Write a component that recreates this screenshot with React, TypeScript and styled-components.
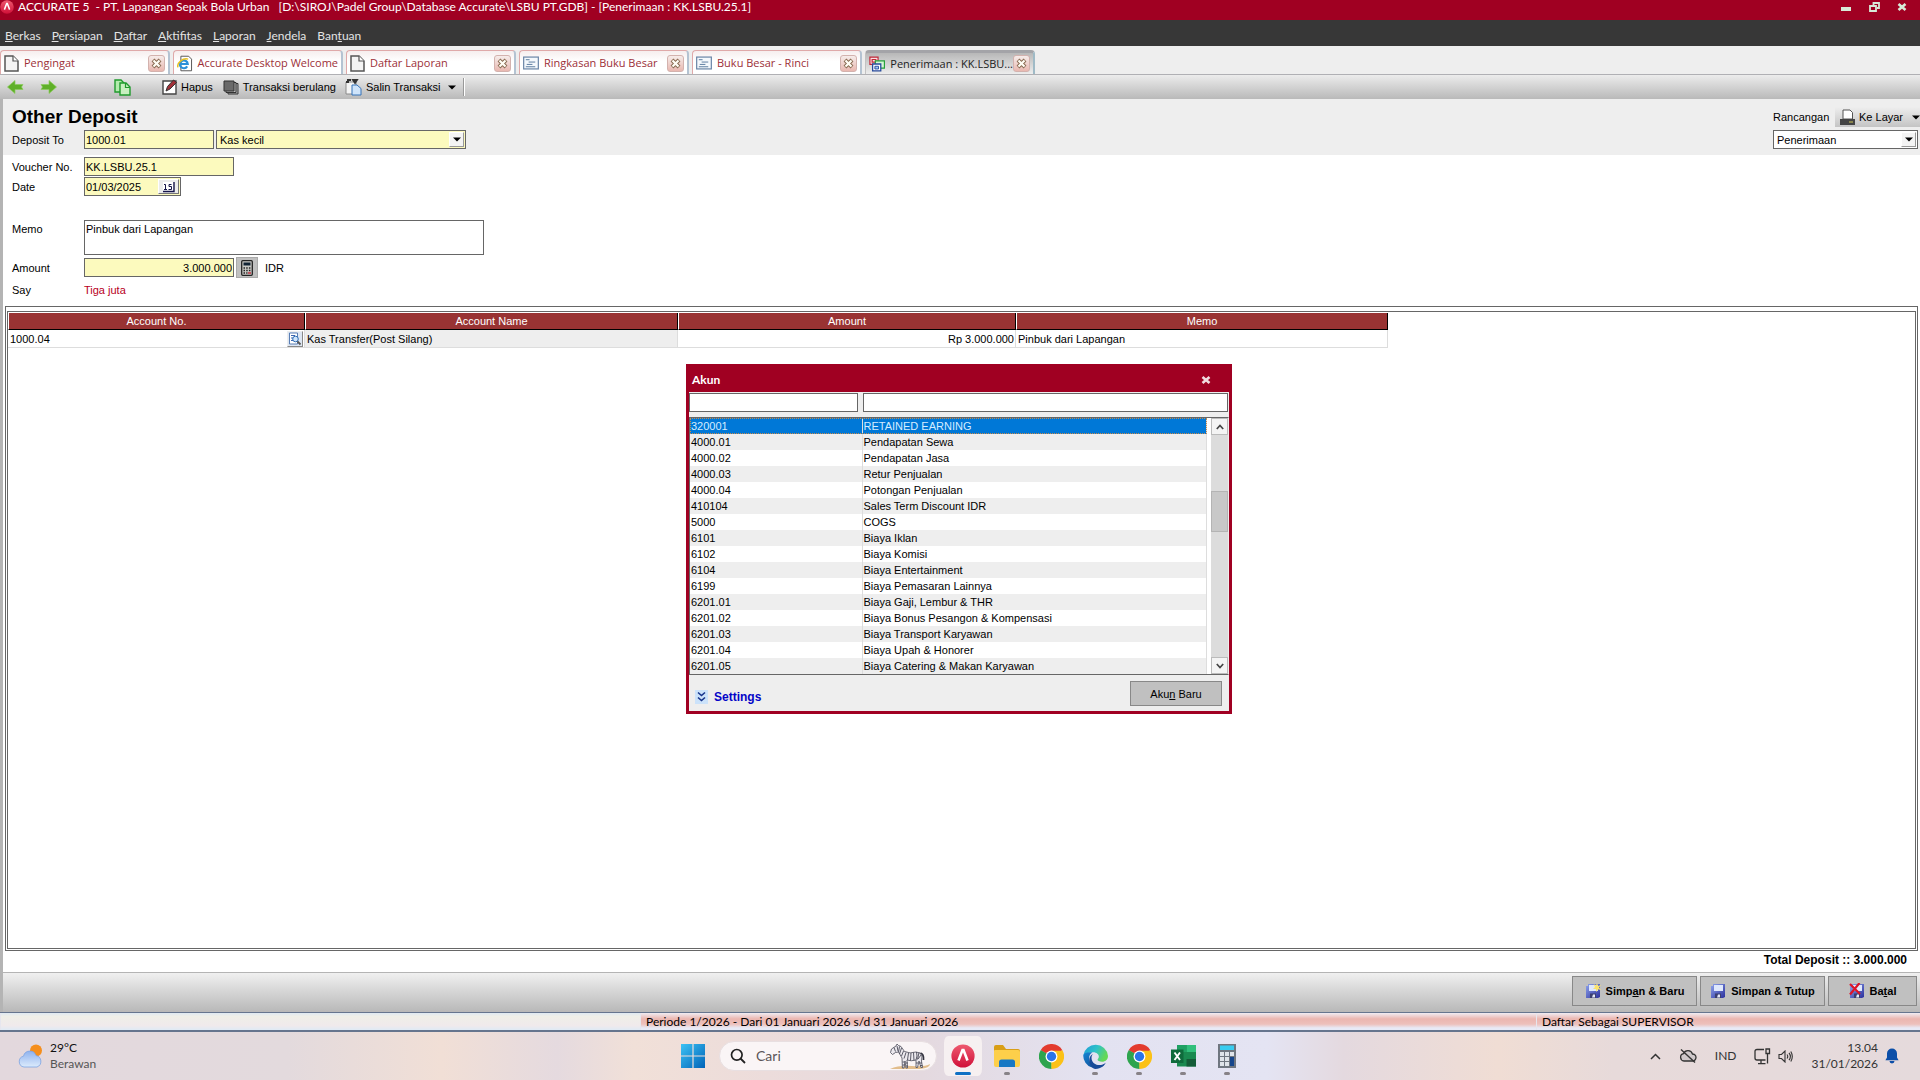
import React from "react";
import styled, { createGlobalStyle, css } from "styled-components";

const SANS = `"Liberation Sans", Arial, sans-serif`;
const UI = `Lato, "Open Sans", sans-serif`;
const TAB_FONT = `"Open Sans", "Noto Sans", sans-serif`;
const RED = "#a00022";
const YELLOW = "#fcfabe";

const GlobalStyle = createGlobalStyle`
  *, *::before, *::after { box-sizing: border-box; }
  body { margin: 0; background: #fff; color: #000; font: 11px/16px ${SANS}; }
  button, input, select, textarea { font: inherit; color: inherit; margin: 0; }
  h1, h2 { margin: 0; }
`;

const Screen = styled.div`
  min-height: 100vh;
  display: flex;
  flex-direction: column;
`;

/* ---------- window chrome ---------- */
const TitleBar = styled.header`
  height: 20px;
  padding: 0 9px 0 0;
  display: flex;
  align-items: flex-start;
  background: ${RED};
  color: #fff;
  font: 12px/14px ${UI};
  white-space: pre;
`;
const AppTitle = styled.span`
  flex: 1;
  padding-left: 4px;
`;
const WindowButtons = styled.div`
  display: flex;
  gap: 10px;
`;
const ChromeButton = styled.button`
  width: 18px;
  height: 14px;
  padding: 0;
  border: 0;
  background: none;
  display: grid;
  place-items: center;
`;
const MenuBar = styled.nav`
  height: 26px;
  padding: 5px 5px 0;
  display: flex;
  align-items: center;
  gap: 11px;
  background: #373737;
`;
const MenuLink = styled.a`
  color: #e4e4e4;
  text-decoration: none;
  font: 12px/20px ${UI};
`;

/* ---------- tabs ---------- */
const TabStrip = styled.div`
  height: 29px;
  padding-top: 4px;
  display: flex;
  align-items: stretch;
  gap: 3px;
  background: #eee;
  border-bottom: 1px solid #b0b0b4;
`;
const Tab = styled.div<{ $active?: boolean }>`
  width: 170px;
  padding: 1px 3px 0;
  display: flex;
  align-items: center;
  border: 1px solid #dfa9a9;
  border-right: 2px solid #b4c3d2;
  border-bottom: 0;
  border-radius: 4px 4px 0 0;
  background: linear-gradient(#f6eeee, #fff 45%);
  color: #9c3038;
  ${(p) =>
    p.$active &&
    css`
      padding-top: 0;
      color: #222;
      border-color: #a4a4a8 #9fbac6 #eee #c2c2c2;
      border-top-width: 3px;
      background: linear-gradient(#b8b8b8, #ededed);
    `}
`;
const TabButton = styled.button`
  flex: 1;
  min-width: 0;
  padding: 0;
  border: 0;
  background: none;
  display: flex;
  align-items: center;
  gap: 5px;
  font: 11px/16px ${TAB_FONT};
  white-space: nowrap;
  text-align: left;
`;
const TabClose = styled.button`
  width: 17px;
  height: 17px;
  padding: 0;
  display: grid;
  place-items: center;
  border: 1px solid #d3b2ae;
  border-radius: 3px;
  background: linear-gradient(#f6ecea, #e9b8b0);
`;

/* ---------- toolbar ---------- */
const ToolBar = styled.div`
  height: 24px;
  padding-left: 7px;
  display: flex;
  align-items: center;
  background: linear-gradient(#ececec, #b9b9b9);
`;
const ToolGroup = styled.div<{ $before?: number; $gap?: number }>`
  display: flex;
  align-items: center;
  gap: ${(p) => p.$gap ?? 10}px;
  margin-left: ${(p) => p.$before ?? 0}px;
`;
const ToolButton = styled.button`
  height: 20px;
  padding: 0;
  border: 0;
  background: none;
  display: flex;
  align-items: center;
  gap: 4px;
  white-space: nowrap;
`;
const ToolDivider = styled.span`
  width: 2px;
  height: 18px;
  border-left: 1px solid #999;
  border-right: 1px solid #fff;
`;

/* ---------- document ---------- */
const Workspace = styled.main`
  flex: 1;
  display: flex;
  flex-direction: column;
  border-left: 3px solid #b4b4b4;
`;
const DocHead = styled.section`
  height: 56px;
  padding: 7px 0 6px 9px;
  display: flex;
  justify-content: space-between;
  align-items: flex-end;
  background: #eee;
`;
const DocTitle = styled.h1`
  font: bold 19px/22px ${SANS};
`;
const Row = styled.div<{ $top?: number; $align?: string }>`
  display: flex;
  align-items: ${(p) => p.$align ?? "center"};
  gap: 2px;
  margin-top: ${(p) => p.$top ?? 0}px;
`;
const Label = styled.label`
  width: 70px;
  line-height: 18px;
`;
const fieldBase = css`
  border: 1px solid #666;
  border-radius: 0;
  padding: 0 1px;
  outline: 0;
`;
const Field = styled.input<{ $w: number; $end?: boolean; $white?: boolean }>`
  ${fieldBase}
  width: ${(p) => p.$w}px;
  height: 19px;
  background: ${(p) => (p.$white ? "#fff" : YELLOW)};
  text-align: ${(p) => (p.$end ? "right" : "left")};
`;
const MemoField = styled.textarea`
  ${fieldBase}
  width: 400px;
  height: 35px;
  resize: none;
  line-height: 16px;
`;
const SelectBox = styled.div<{ $w: number }>`
  position: relative;
  width: ${(p) => p.$w}px;
  height: 19px;
`;
const Select = styled.select<{ $white?: boolean }>`
  ${fieldBase}
  padding-left: 3px;
  appearance: none;
  width: 100%;
  height: 100%;
  background: ${(p) => (p.$white ? "#fff" : YELLOW)};
`;
const SelectArrow = styled.span`
  position: absolute;
  top: 2px;
  right: 2px;
  bottom: 2px;
  width: 15px;
  display: grid;
  place-items: center;
  background: #f4f4f4;
  border: 1px solid;
  border-color: #fff #999 #999 #fff;
  pointer-events: none;
`;
const DateBox = styled.div`
  width: 97px;
  height: 19px;
  padding: 1px;
  display: flex;
  align-items: stretch;
  border: 1px solid #666;
  background: ${YELLOW};
`;
const DateInput = styled.input`
  flex: 1;
  min-width: 0;
  padding: 0;
  border: 0;
  outline: 0;
  background: none;
`;
const DateButton = styled.button`
  width: 21px;
  padding: 0;
  display: grid;
  place-items: center;
  border: 1px solid;
  border-color: #fff #777 #777 #fff;
  background: #ececec;
`;
const CalcButton = styled.button`
  width: 22px;
  height: 21px;
  padding: 0;
  display: grid;
  place-items: center;
  border: 1px solid #aaa;
  background: #c0c0c0;
`;
const Currency = styled.span`
  padding-left: 5px;
`;
const Say = styled.output`
  color: #b8001c;
  line-height: 18px;
`;
const Form = styled.section`
  padding: 2px 9px 7px;
`;
const Design = styled.div`
  width: 147px;
`;
const DesignTop = styled.div`
  display: flex;
  align-items: center;
  justify-content: space-between;
  margin-bottom: 3px;
`;
const PrintButton = styled.button`
  width: 85px;
  height: 20px;
  padding: 0 0 0 4px;
  border: 0;
  display: flex;
  align-items: center;
  gap: 3px;
  background: linear-gradient(#eee, #c4c4c4);
  white-space: nowrap;
  svg:last-child { margin-left: auto; }
`;

/* ---------- journal grid ---------- */
const GridFrame = styled.section`
  flex: 1;
  margin: 0 2px 0 2px;
  padding: 4px 1px 1px;
  display: flex;
  border: 1px solid #666;
`;
const GridInner = styled.div`
  flex: 1;
  padding: 1px 0 0;
  border: 1px solid #666;
`;
const Grid = styled.table`
  width: 1380px;
  border-collapse: separate;
  border-spacing: 0;
  table-layout: fixed;
`;
const HeadCell = styled.th<{ $w: number }>`
  width: ${(p) => p.$w}px;
  height: 17px;
  padding: 0;
  background: #993333;
  color: #fff;
  font-weight: normal;
  line-height: 15px;
  border-right: 1px solid #000;
  border-bottom: 1px solid #000;
  border-left: 1px solid #fff;
`;
const Cell = styled.td<{ $shade?: boolean; $end?: boolean }>`
  height: 18px;
  padding: 0 1px 0 2px;
  background: ${(p) => (p.$shade ? "#eee" : "#fff")};
  text-align: ${(p) => (p.$end ? "right" : "left")};
  border-right: 1px solid #ddd;
  border-bottom: 1px solid #ddd;
`;
const CellSplit = styled.div`
  display: flex;
  justify-content: space-between;
  align-items: center;
`;
const LookupButton = styled.button`
  width: 16px;
  height: 16px;
  padding: 0;
  display: grid;
  place-items: center;
  border: 1px solid;
  border-color: #eee #888 #888 #eee;
  background: #dde6f2;
`;
const TotalLine = styled.div`
  height: 21px;
  padding: 1px 13px 0 0;
  font: bold 12px/16px ${SANS};
  text-align: right;
`;
const ActionBar = styled.footer`
  height: 40px;
  padding: 3px 3px 0;
  display: flex;
  justify-content: flex-end;
  gap: 3px;
  border-top: 1px solid #b4b4b4;
  background: linear-gradient(#f0f0f0, #b8b8b8);
`;
const ActionButton = styled.button<{ $w: number }>`
  width: ${(p) => p.$w}px;
  height: 30px;
  padding: 0;
  display: flex;
  justify-content: center;
  align-items: center;
  gap: 5px;
  border: 1px solid #888;
  background: #c0c0c0;
  font-weight: bold;
`;

/* ---------- status bar ---------- */
const StatusBar = styled.div`
  height: 20px;
  display: grid;
  grid-template-columns: 5fr 7fr 3fr;
  border: 1px solid #66758e;
  border-width: 1px 0 2px;
  font: 12px/17px ${UI};
`;
const StatusCell = styled.div<{ $tinted?: boolean }>`
  padding-left: 5px;
  border-left: 1px solid #e6e6ee;
  background: ${(p) =>
    p.$tinted
      ? "linear-gradient(#f0ecf2, #ebb6b0 35%, #edc0bb 65%, #e8eaf6 88%)"
      : "linear-gradient(#dfe9f2, #efefe8 20%, #f0eaec 75%, #dfeaf5)"};
`;

/* ---------- account dialog ---------- */
const DialogLayer = styled.div`
  position: fixed;
  inset: 0;
  padding: 0 2px 2px 0;
  display: grid;
  place-items: center;
  pointer-events: none;
`;
const Dialog = styled.section`
  width: 546px;
  border: 3px solid ${RED};
  background: #eee;
  pointer-events: auto;
`;
const DialogBar = styled.div`
  height: 25px;
  padding: 0 14px 0 3px;
  display: flex;
  align-items: center;
  justify-content: space-between;
  background: ${RED};
  color: #fff;
`;
const DialogTitle = styled.h2`
  font: bold 12px/20px ${UI};
`;
const FilterRow = styled.div`
  padding: 1px 1px 5px 0;
  display: flex;
  gap: 5px;
  input:last-child { flex: 1; }
`;
const ListFrame = styled.div`
  display: flex;
  border: 1px solid #666;
  border-right-color: #eee;
  background: #fff;
`;
const List = styled.table`
  width: 517px;
  border-collapse: collapse;
  table-layout: fixed;
`;
const ListRow = styled.tr<{ $selected?: boolean }>`
  height: 16px;
  &:nth-child(even) { background: #eee; }
  ${(p) =>
    p.$selected &&
    css`
      background: #0078d7;
      color: #d4ecff;
      outline: 1px dotted #c98a4a;
      outline-offset: -1px;
    `}
`;
const ListCell = styled.td<{ $w?: number }>`
  ${(p) => p.$w && `width: ${p.$w}px;`}
  padding: 0 2px 0 1px;
  line-height: 16px;
  border-right: 1px solid #ddd;
`;
const Scroll = styled.div`
  width: 17px;
  margin-left: auto;
  display: flex;
  flex-direction: column;
  background: #dcdcdc;
`;
const ScrollButton = styled.button`
  width: 17px;
  height: 17px;
  padding: 0;
  display: grid;
  place-items: center;
  border: 1px solid #bbb;
  background: #f4f4f4;
`;
const ScrollTrack = styled.div`
  flex: 1;
  padding-top: 56px;
`;
const ScrollThumb = styled.div`
  height: 41px;
  border: 1px solid #b4b4b4;
  background: #c8c8c8;
`;
const DialogFoot = styled.div`
  height: 36px;
  padding: 6px 7px 5px 6px;
  display: flex;
  justify-content: space-between;
  align-items: center;
`;
const SettingsLink = styled.a`
  display: flex;
  align-items: center;
  gap: 6px;
  padding-top: 7px;
  color: #0404c8;
  font: bold 12px/16px ${SANS};
  text-decoration: none;
`;
const NewButton = styled.button`
  width: 92px;
  height: 25px;
  border: 1px solid #888;
  background: #c0c0c0;
`;

/* ---------- taskbar ---------- */
const TaskBar = styled.footer`
  height: 48px;
  display: grid;
  grid-template-columns: 1fr auto 1fr;
  align-items: center;
  background: linear-gradient(
    90deg, #e3d8dd, #e3dadd 15%, #f1dfd6 23%, #e5dadf 29%, #f1e0d8 33%, #ecdcdb 40%,
    #e4d9df 48%, #e3e2f1 57%, #e4e4f3 66%, #e4d9df 70%, #f0ddd4 78%, #e7dada 84%, #e5dadc);
`;
const Weather = styled.div`
  padding-left: 18px;
  display: flex;
  align-items: center;
  gap: 7px;
  font: 12px/16px ${UI};
  color: #555;
`;
const Temp = styled.div`
  color: #111;
`;
const TaskItems = styled.div`
  display: flex;
  align-items: center;
`;
const SearchBox = styled.label`
  width: 218px;
  height: 30px;
  margin: 0 4px;
  padding: 0 5px 0 10px;
  display: flex;
  align-items: center;
  gap: 10px;
  border-radius: 15px;
  background: #faf5f6;
  border: 1px solid #e8dfe1;
`;
const SearchInput = styled.input`
  flex: 1;
  min-width: 0;
  padding: 0;
  border: 0;
  outline: 0;
  background: none;
  font: 14px/20px ${UI};
  &::placeholder { color: #5c5658; opacity: 1; }
`;
const TaskButton = styled.button<{ $active?: boolean; $running?: boolean }>`
  position: relative;
  width: 44px;
  height: 40px;
  padding: 0;
  border: 3px solid transparent;
  border-width: 0 3px;
  border-radius: 7px;
  background: ${(p) => (p.$active ? "#f6f0f1" : "none")};
  background-clip: padding-box;
  display: grid;
  place-items: center;
  ${(p) =>
    (p.$active || p.$running) &&
    css`
      &::after {
        content: "";
        position: absolute;
        bottom: 1px;
        left: 50%;
        width: ${p.$active ? 16 : 6}px;
        height: 3px;
        border-radius: 2px;
        transform: translateX(-50%);
        background: ${p.$active ? "#0f70c4" : "#878287"};
      }
    `}
`;
const Tray = styled.div`
  padding-right: 21px;
  display: flex;
  justify-content: flex-end;
  align-items: center;
  gap: 18px;
  font: 12px/16px ${UI};
  color: #333;
`;
const TrayPair = styled.div`
  display: flex;
  align-items: center;
  gap: 7px;
`;
const Clock = styled.div`
  text-align: right;
`;

/* ---------- icons ---------- */
const AccurateLogo = ({ size }: { size: number }) => (
  <svg width={size} height={size} viewBox="0 0 24 24" aria-hidden="true">
    <defs>
      <linearGradient id="acc" x1="0" y1="0" x2="0" y2="1">
        <stop offset="0" stopColor="#ee5a70" />
        <stop offset="1" stopColor="#d01038" />
      </linearGradient>
    </defs>
    <circle cx="12" cy="12" r="11.6" fill="url(#acc)" />
    <path d="M7.500 16.500L11.500 6h1l4 10.500" fill="none" stroke="#fff" strokeWidth="2.600" />
  </svg>
);
const CloseX = ({ c = "#d8ead8" }: { c?: string }) => (
  <svg width="10" height="8" viewBox="0 0 10 8" aria-hidden="true">
    <path d="M1.500 1l7 6M8.500 1l-7 6" stroke={c} strokeWidth="2.600" />
  </svg>
);
const DownTri = () => (
  <svg width="8" height="5" viewBox="0 0 8 5" aria-hidden="true">
    <path d="M0 .5h8L4 4.500z" fill="#000" />
  </svg>
);
const TabX = () => (
  <svg width="11" height="11" viewBox="0 0 11 11" aria-hidden="true">
    <path d="M2 2l7 7M9 2l-7 7" stroke="#86694f" strokeWidth="4" />
    <path d="M2.500 2.500l6 6M8.500 2.500l-6 6" stroke="#fffdf4" strokeWidth="2.200" />
  </svg>
);
const PageIcon = () => (
  <svg width="15" height="17" viewBox="0 0 15 17" aria-hidden="true">
    <path d="M1 1h8l5 5v10H1z" fill="#f4f4f4" stroke="#555" strokeWidth="1.500" />
    <path d="M9 1v5h5" fill="#fff" stroke="#555" strokeWidth="1.200" />
  </svg>
);
const IeIcon = () => (
  <svg width="16" height="17" viewBox="0 0 16 17" aria-hidden="true">
    <path d="M4 1h8l3 3v12H4z" fill="#fff" stroke="#555" />
    <path d="M10.500 11.500a4 4 0 1 1 .6-2.500H3.500" fill="none" stroke="#2b8fd8" strokeWidth="2.200" />
    <path d="M1 12.500C-.5 8 6 2.500 11.500 4" fill="none" stroke="#e8c020" strokeWidth="1.500" />
  </svg>
);
const ReportIcon = () => (
  <svg width="16" height="14" viewBox="0 0 17 14" aria-hidden="true">
    <rect x=".7" y=".7" width="15.600" height="12.600" fill="#f4f8fc" stroke="#6c87a8" strokeWidth="1.300" />
    <path d="M3 3.500h4M6 6h7M4 8.500h6M3 11h10" stroke="#55779c" />
  </svg>
);
const FormsIcon = () => (
  <svg width="18" height="18" viewBox="0 0 18 17" aria-hidden="true">
    <path d="M1 1h9v8H1zM3.500 3.500h4v3h-4z" fill="#fbe0e4" stroke="#c02838" strokeWidth="1.300" />
    <path d="M7 5h10v8H7z" fill="#d4f6d4" stroke="#26a03c" strokeWidth="1.300" />
    <path d="M4 8.500h9V16H4z" fill="#fff" stroke="#274a9c" strokeWidth="1.400" />
    <path d="M6.500 11h4v3h-4z" fill="#9cc4f4" stroke="#274a9c" />
  </svg>
);
const ArrowIcon = ({ right }: { right?: boolean }) => (
  <svg width="17" height="14" viewBox="0 0 17 14" aria-hidden="true">
    <path
      d={right ? "M16.500 7L9 .5v4H1L2.500 7 1 9.500h8v4z" : "M.5 7L8 .5v4h8L14.500 7 16 9.500H8v4z"}
      fill="#5fb028"
      stroke="#8acb5a"
      strokeWidth=".7"
    />
  </svg>
);
const CopyIcon = () => (
  <svg width="17" height="17" viewBox="0 0 17 17" aria-hidden="true">
    <path d="M1 1h6l3 3v9H1z" fill="#b4ecae" stroke="#1f9a2c" strokeWidth="1.400" />
    <path d="M6 4h6l4 4v8H6z" fill="#c8f0c0" stroke="#1f9a2c" strokeWidth="1.400" />
    <path d="M11.500 4v4.500H16" fill="none" stroke="#1f9a2c" strokeWidth="1.200" />
  </svg>
);
const EditIcon = () => (
  <svg width="15" height="16" viewBox="0 0 15 16" aria-hidden="true">
    <path d="M1 2h13v13H1z" fill="#fff" stroke="#444" strokeWidth="1.400" />
    <path d="M4 12l1.500-4.500L11.500 1l3 2.500L8 10z" fill="#a03038" stroke="#333" />
  </svg>
);
const RecurIcon = () => (
  <svg width="16" height="15" viewBox="0 0 16 15" aria-hidden="true">
    <path d="M5 3.500h10V14H5z" fill="#aaa" stroke="#333" />
    <path d="M3 2.500h10v10H3z" fill="#bbb" stroke="#333" />
    <path d="M1 1h10v10H1z" fill="#6a6a6a" stroke="#333" />
  </svg>
);
const CopyTxIcon = () => (
  <svg width="17" height="17" viewBox="0 0 17 17" aria-hidden="true">
    <path d="M1 3h10v12H1z" fill="#f4f4f4" stroke="#8a8a8a" />
    <path d="M1 3h3M8 1h4l-2 3zM2 1h4" stroke="#333" strokeWidth="1.800" fill="#333" />
    <path d="M7 6h5l4 3.500V16H7z" fill="#cfe4fa" stroke="#3572b8" />
  </svg>
);
const PrinterIcon = () => (
  <svg width="17" height="17" viewBox="0 0 17 17" aria-hidden="true">
    <path d="M4 10V1h7l2.500 2.500V10z" fill="#fff" stroke="#555" />
    <path d="M1 10h15v6H1z" fill="#444" />
    <path d="M10 13h4" stroke="#9c9650" strokeWidth="1.600" />
  </svg>
);
const CalendarIcon = () => (
  <svg width="13" height="12" viewBox="0 0 13 12" aria-hidden="true">
    <path d="M1 1h10v9H1z" fill="#fff" />
    <path d="M1 10.500h11V1" fill="none" stroke="#16164a" strokeWidth="1.400" />
    <path d="M2 3.500h1.500v5M2 8.500h3M9.500 3.500H7v2h2.500v3H6.500" fill="none" stroke="#16164a" />
  </svg>
);
const CalcIcon = () => (
  <svg width="12" height="16" viewBox="0 0 12 16" aria-hidden="true">
    <rect x=".7" y=".7" width="10.600" height="14.600" rx="1" fill="#c8c8c4" stroke="#222" strokeWidth="1.300" />
    <path d="M2.500 2.500h7v3h-7z" fill="#123" />
    <path d="M2.500 8h7M2.500 10.500h7M2.500 13h4" stroke="#222" strokeWidth="1.500" strokeDasharray="1.500 1.200" />
    <path d="M7 13h3" stroke="#c03040" strokeWidth="1.500" />
  </svg>
);
const LookupIcon = () => (
  <svg width="14" height="14" viewBox="0 0 14 14" aria-hidden="true">
    <path d="M1.500 1h8v11h-8z" fill="#fff" stroke="#5a7eb4" />
    <path d="M3 3.500h4M3 6h2M3 8.500h2" stroke="#3c66b0" />
    <circle cx="7.500" cy="7" r="2.800" fill="#cfe4fa" stroke="#2d6cb4" />
    <path d="M9.500 9.500l3 3" stroke="#555" strokeWidth="1.800" />
  </svg>
);
const SaveIcon = ({ mark }: { mark?: "new" | "cancel" }) => (
  <svg width="16" height="16" viewBox="0 0 16 16" aria-hidden="true">
    <defs>
      <linearGradient id="disk" x1="0" y1="0" x2="1" y2="1">
        <stop offset="0" stopColor="#8fa4ec" />
        <stop offset="1" stopColor="#2a2f9c" />
      </linearGradient>
    </defs>
    <path d="M1 3h2V1h12v13l-2 1H1z" fill="url(#disk)" />
    <path d="M4 2h9v6H4z" fill="#dfe8fc" />
    <path d="M5 10.500h6V15H5z" fill="#3b3f70" />
    <path d="M8 11.500h2v3H7z" fill="#e4e8f8" />
    {mark === "new" && <path d="M12 0l1 3 3-1-2 2.500L16 7l-3-.8L11.500 9l-.7-3L8 6l2-2-1.500-3L11 2.500z" fill="#fbe36c" />}
    {mark === "cancel" && <path d="M1 1l10 10M10.500 0L1 11.500" stroke="#dc1428" strokeWidth="2.200" />}
  </svg>
);
const ScrollChevron = ({ down }: { down?: boolean }) => (
  <svg width="8" height="6" viewBox="0 0 8 6" aria-hidden="true">
    <path d={down ? "M.8 1L4 4.500 7.200 1" : "M.8 5L4 1.500 7.200 5"} fill="none" stroke="#444" strokeWidth="1.700" />
  </svg>
);
const ExpandIcon = () => (
  <svg width="13" height="14" viewBox="0 0 13 14" aria-hidden="true">
    <path d="M0 0h13v14H0z" fill="#cbe2fa" />
    <path d="M3 2.500l3.500 3 3.500-3M3 7.500l3.500 3 3.500-3" fill="none" stroke="#16348c" strokeWidth="1.600" />
  </svg>
);
const WeatherIcon = () => (
  <svg width="25" height="26" viewBox="0 0 25 26" aria-hidden="true">
    <defs>
      <linearGradient id="cld" x1="0" y1="0" x2="0" y2="1">
        <stop offset="0" stopColor="#8fb2ee" />
        <stop offset="1" stopColor="#dcebfc" />
      </linearGradient>
    </defs>
    <circle cx="18" cy="7.500" r="6" fill="#f58e1c" />
    <path d="M6 24a5.500 5.500 0 0 1-.5-10.800A6.500 6.500 0 0 1 18 12.500a6 6 0 0 1 1 11.500z" fill="url(#cld)" stroke="#7ba3e2" strokeWidth=".8" />
  </svg>
);
const WindowsIcon = () => (
  <svg width="24" height="24" viewBox="0 0 24 24" aria-hidden="true">
    <defs>
      <linearGradient id="win" x1="0" y1="0" x2="1" y2="1">
        <stop offset="0" stopColor="#3cc2f4" />
        <stop offset="1" stopColor="#0063b8" />
      </linearGradient>
    </defs>
    <path d="M0 0h11.400v11.400H0zM12.600 0H24v11.400H12.600zM0 12.600h11.400V24H0zM12.600 12.600H24V24H12.600z" fill="url(#win)" />
  </svg>
);
const SearchIcon = () => (
  <svg width="16" height="16" viewBox="0 0 16 16" aria-hidden="true">
    <circle cx="6.800" cy="6.800" r="5.300" fill="none" stroke="#222" strokeWidth="1.700" />
    <path d="M10.500 10.500l4.500 4.500" stroke="#222" strokeWidth="1.800" />
  </svg>
);
const ZebraIcon = () => (
  <svg width="42" height="27" viewBox="0 0 42 27" aria-hidden="true">
    <path d="M1 26q9-4 22-3t18-2q0 4-10 5z" fill="#e2bd8c" />
    <path
      d="M1.500 9.500L2.500 6l4.500-3 1-2 1.500 1.500L12 3.500l3.500 5Q21 11 27 9q5 0 6 4l-.5 5 1 6.500h-1.600L30 18l-1.500 6.500H27L27 17q-5 1.500-9 0l.5 8H17l-1-7-1 7h-1.600L13 15l-3.500-6-3 .5-3 2z"
      fill="#ece9ee"
      stroke="#4a4a58"
      strokeWidth=".8"
    />
    <path
      d="M5 4.500l1.500 4M8 3l1 5M10.500 3.500L9.500 9M12.500 5l-2 6M14.500 8l-2 5M17 9.500l-2 6M19.500 10l-1 7M22 10l-.5 7.500M24.500 9.500l.5 8M27.500 9l.5 4-1 4M30 9.500l-1.500 7M32 12l-3 4M13.500 19h2M17 20h2M13.500 22h2M17 23h2M27 20h2M30.500 20h2.500M31 22.500h2.500"
      stroke="#4a4a58"
      strokeWidth=".9"
      fill="none"
    />
    <path d="M31.500 10q3.500 1 3 7" fill="none" stroke="#33333f" strokeWidth="1.700" />
  </svg>
);
const FolderIcon = () => (
  <svg width="26" height="24" viewBox="0 0 26 24" aria-hidden="true">
    <path d="M0 3q0-2 2-2h7l3 4h12q2 0 2 2v5H0z" fill="#d99e16" />
    <path d="M0 7q0-1 1-1h23q2 0 2 2v13q0 2-2 2H2q-2 0-2-2z" fill="#fdcf4a" />
    <path d="M5 23v-5q0-2.500 2.500-2.500h11Q21 15.500 21 18v5z" fill="#1878c4" />
  </svg>
);
const ChromeIcon = () => (
  <svg width="25" height="25" viewBox="0 0 24 24" aria-hidden="true">
    <path d="M12 12L1.600 6A12 12 0 0 1 22.400 6z" fill="#e33b2e" />
    <path d="M12 12L22.400 6A12 12 0 0 1 12 24z" fill="#fbc116" />
    <path d="M12 12l0 12A12 12 0 0 1 1.600 6z" fill="#2da44e" />
    <path d="M12 6.500h10.600L17 14.500z" fill="#fbc116" />
    <path d="M12 24l5-9.500-5 2z" fill="#fbc116" />
    <path d="M1.600 6l5.500 9L9 10z" fill="#2da44e" />
    <circle cx="12" cy="12" r="5.700" fill="#fff" />
    <circle cx="12" cy="12" r="4.500" fill="#2a74e8" />
  </svg>
);
const EdgeIcon = () => (
  <svg width="25" height="25" viewBox="0 0 24 24" aria-hidden="true">
    <defs>
      <linearGradient id="edgeTop" x1="0" y1="0" x2="1" y2="0.400">
        <stop offset="0" stopColor="#1f9ad8" />
        <stop offset=".55" stopColor="#2fc2c8" />
        <stop offset="1" stopColor="#64d856" />
      </linearGradient>
      <linearGradient id="edgeLow" x1="0" y1="0" x2="1" y2="1">
        <stop offset="0" stopColor="#1585d4" />
        <stop offset="1" stopColor="#123f86" />
      </linearGradient>
    </defs>
    <path d="M.2 11A12 12 0 0 1 24 11.500c0 3.500-2.800 5.500-5.500 5.500-3 0-4.500-1.200-4.500-2 0-.7 1.200-1 1.200-3 0-2-2-4.200-5.500-4.200C5 7.800 1 9.500.2 11z" fill="url(#edgeTop)" />
    <path d="M.2 11C1 8.500 5 7.300 9 8.200c-2.500 1.300-3.500 4-3 7C6.800 19.500 11 22 15 21.500c2.500-.3 5-1.500 6.500-2.800A12 12 0 0 1 .2 11z" fill="url(#edgeLow)" />
    <path d="M9.500 9.500C7 12 8 18 13 19.800c3 1 6.500.2 8.800-1.800-.5 2-4.500 6-9.800 6C6 22.500 3.500 12.500 9.500 9.500z" fill="#174a98" />
  </svg>
);
const ExcelIcon = () => (
  <svg width="25" height="24" viewBox="0 0 25 24" aria-hidden="true">
    <path d="M6 1h19v21.500H6z" fill="#1a8a50" />
    <path d="M15.500 1H25v7h-9.500z" fill="#32c07c" />
    <path d="M6 1h9.500v7H6z" fill="#20a163" />
    <path d="M15.500 15H25v7.500h-9.500z" fill="#145c38" />
    <path d="M0 5.500h12.500V19H0z" fill="#0f6b3c" />
    <path d="M3.500 8.500l5.500 7.500M9 8.500L3.500 16" stroke="#fff" strokeWidth="1.900" />
  </svg>
);
const CalculatorIcon = () => (
  <svg width="18" height="24" viewBox="0 0 18 24" aria-hidden="true">
    <path d="M0 0h18v24H0z" fill="#6f7680" />
    <path d="M2 1.500h14V6H2z" fill="#38ccf0" />
    <path d="M2 8h4v4H2zM7 8h4v4H7zM12 8h4v4h-4zM2 13h4v4H2zM7 13h4v4H7zM2 18h4v4H2zM7 18h4v4H7z" fill="#dfe4ea" />
    <path d="M12 13h4v9h-4z" fill="#16468c" />
  </svg>
);
const ChevronUpIcon = () => (
  <svg width="11" height="7" viewBox="0 0 11 7" aria-hidden="true">
    <path d="M1 6l4.500-4.500L10 6" fill="none" stroke="#333" strokeWidth="1.500" />
  </svg>
);
const CloudOffIcon = () => (
  <svg width="18" height="14" viewBox="0 0 18 14" aria-hidden="true">
    <path d="M5 12a3.700 3.700 0 0 1-.5-7.300A4.800 4.800 0 0 1 13.500 5a3.500 3.500 0 0 1 0 7z" fill="#cfc8ca" stroke="#333" strokeWidth="1.300" />
    <path d="M2 .5L16 13.500" stroke="#333" strokeWidth="1.400" />
  </svg>
);
const NetworkIcon = () => (
  <svg width="17" height="17" viewBox="0 0 17 17" aria-hidden="true">
    <path d="M10 1.500H3q-2 0-2 2V10q0 2 2 2h8.500M7 12v3.500M4 15.700h7.500M13.500 6v9.500M12 1h3.500v4.500H12z" fill="none" stroke="#333" strokeWidth="1.300" />
  </svg>
);
const VolumeIcon = () => (
  <svg width="15" height="13" viewBox="0 0 15 13" aria-hidden="true">
    <path d="M1 4.500h2.500L7 1v11L3.500 8.500H1zM9 4.500q1.500 2 0 4M11 2.800q2.800 3.700 0 7.400M12.800 1.500q3 5 0 10" fill="none" stroke="#333" strokeWidth="1.100" />
  </svg>
);
const BellIcon = () => (
  <svg width="14" height="16" viewBox="0 0 14 16" aria-hidden="true">
    <path d="M7 .5a5 5 0 0 1 5 5v4l1.600 2.800H.4L2 9.500v-4a5 5 0 0 1 5-5zM4.500 13h5a2.500 2.500 0 0 1-5 0z" fill="#0b4ea8" />
  </svg>
);

/* ---------- data ---------- */
const menus: [string, string, string][] = [
  ["", "B", "erkas"], ["", "P", "ersiapan"], ["", "D", "aftar"], ["", "A", "ktifitas"],
  ["", "L", "aporan"], ["", "J", "endela"], ["Ban", "t", "uan"],
];
const tabs = [
  { text: "Pengingat", icon: <PageIcon />, closable: true },
  { text: "Accurate Desktop Welcome", icon: <IeIcon /> },
  { text: "Daftar Laporan", icon: <PageIcon />, closable: true },
  { text: "Ringkasan Buku Besar", icon: <ReportIcon />, closable: true },
  { text: "Buku Besar - Rinci", icon: <ReportIcon />, closable: true },
  { text: "Penerimaan : KK.LSBU...", icon: <FormsIcon />, closable: true, active: true },
];
const columns: [string, number][] = [
  ["Account No.", 297], ["Account Name", 373], ["Amount", 338], ["Memo", 372],
];
const accounts: [string, string][] = [
  ["320001", "RETAINED EARNING"],
  ["4000.01", "Pendapatan Sewa"],
  ["4000.02", "Pendapatan Jasa"],
  ["4000.03", "Retur Penjualan"],
  ["4000.04", "Potongan Penjualan"],
  ["410104", "Sales Term Discount IDR"],
  ["5000", "COGS"],
  ["6101", "Biaya Iklan"],
  ["6102", "Biaya Komisi"],
  ["6104", "Biaya Entertainment"],
  ["6199", "Biaya Pemasaran Lainnya"],
  ["6201.01", "Biaya Gaji, Lembur & THR"],
  ["6201.02", "Biaya Bonus Pesangon & Kompensasi"],
  ["6201.03", "Biaya Transport Karyawan"],
  ["6201.04", "Biaya Upah & Honorer"],
  ["6201.05", "Biaya Catering & Makan Karyawan"],
];
const apps = [
  { name: "Accurate", icon: <AccurateLogo size={24} />, active: true },
  { name: "File Explorer", icon: <FolderIcon />, running: true },
  { name: "Chrome", icon: <ChromeIcon /> },
  { name: "Edge", icon: <EdgeIcon />, running: true },
  { name: "Chrome", icon: <ChromeIcon />, running: true },
  { name: "Excel", icon: <ExcelIcon />, running: true },
  { name: "Calculator", icon: <CalculatorIcon />, running: true },
];

export default function App() {
  return (
    <Screen>
      <GlobalStyle />
      <TitleBar>
        <AccurateLogo size={14} />
        <AppTitle>{"ACCURATE 5  - PT. Lapangan Sepak Bola Urban   [D:\\SIROJ\\Padel Group\\Database Accurate\\LSBU PT.GDB] - [Penerimaan : KK.LSBU.25.1]"}</AppTitle>
        <WindowButtons>
          <ChromeButton aria-label="Minimize">
            <svg width="10" height="8" viewBox="0 0 10 8" aria-hidden="true"><path d="M0 4h10v4H0z" fill="#d8ead8" /></svg>
          </ChromeButton>
          <ChromeButton aria-label="Restore">
            <svg width="11" height="10" viewBox="0 0 11 10" aria-hidden="true">
              <path d="M4.500 3V1H10v5H8M1 4h6v5H1z" fill="none" stroke="#d8ead8" strokeWidth="1.800" />
            </svg>
          </ChromeButton>
          <ChromeButton aria-label="Close"><CloseX /></ChromeButton>
        </WindowButtons>
      </TitleBar>
      <MenuBar>
        {menus.map(([a, k, b]) => (
          <MenuLink href="#" key={a + k + b}>{a}<u>{k}</u>{b}</MenuLink>
        ))}
      </MenuBar>
      <TabStrip>
        {tabs.map((t) => (
          <Tab key={t.text} $active={t.active}>
            <TabButton>{t.icon}{t.text}</TabButton>
            {t.closable && <TabClose aria-label={`Close ${t.text}`}><TabX /></TabClose>}
          </Tab>
        ))}
      </TabStrip>
      <ToolBar>
        <ToolGroup $gap={16}>
          <ToolButton aria-label="Previous"><ArrowIcon /></ToolButton>
          <ToolButton aria-label="Next"><ArrowIcon right /></ToolButton>
        </ToolGroup>
        <ToolGroup $before={57}>
          <ToolButton aria-label="Copy"><CopyIcon /></ToolButton>
        </ToolGroup>
        <ToolGroup $before={31}>
          <ToolButton><EditIcon />Hapus</ToolButton>
          <ToolButton><RecurIcon />Transaksi berulang</ToolButton>
        </ToolGroup>
        <ToolGroup $before={9} $gap={7}>
          <ToolButton><CopyTxIcon />Salin Transaksi</ToolButton>
          <ToolButton aria-label="More"><DownTri /></ToolButton>
          <ToolDivider />
        </ToolGroup>
      </ToolBar>

      <Workspace>
        <DocHead>
          <div>
            <DocTitle>Other Deposit</DocTitle>
            <Row $top={2}>
              <Label htmlFor="depNo">Deposit To</Label>
              <Field id="depNo" $w={130} defaultValue="1000.01" />
              <SelectBox $w={250}>
                <Select aria-label="Deposit account" defaultValue="Kas kecil"><option>Kas kecil</option></Select>
                <SelectArrow><DownTri /></SelectArrow>
              </SelectBox>
            </Row>
          </div>
          <Design>
            <DesignTop>
              <label htmlFor="design">Rancangan</label>
              <PrintButton><PrinterIcon />Ke Layar<DownTri /></PrintButton>
            </DesignTop>
            <SelectBox $w={145}>
              <Select id="design" $white defaultValue="Penerimaan"><option>Penerimaan</option></Select>
              <SelectArrow><DownTri /></SelectArrow>
            </SelectBox>
          </Design>
        </DocHead>

        <Form>
          <Row>
            <Label htmlFor="voucher">Voucher No.</Label>
            <Field id="voucher" $w={150} defaultValue="KK.LSBU.25.1" />
          </Row>
          <Row $top={1}>
            <Label htmlFor="date">Date</Label>
            <DateBox>
              <DateInput id="date" defaultValue="01/03/2025" />
              <DateButton aria-label="Pick date"><CalendarIcon /></DateButton>
            </DateBox>
          </Row>
          <Row $top={24} $align="flex-start">
            <Label htmlFor="memo">Memo</Label>
            <MemoField id="memo" defaultValue="Pinbuk dari Lapangan" />
          </Row>
          <Row $top={2}>
            <Label htmlFor="amount">Amount</Label>
            <Field id="amount" $w={150} $end defaultValue="3.000.000" />
            <CalcButton aria-label="Calculator"><CalcIcon /></CalcButton>
            <Currency>IDR</Currency>
          </Row>
          <Row $top={3}>
            <Label htmlFor="say">Say</Label>
            <Say id="say">Tiga juta</Say>
          </Row>
        </Form>

        <GridFrame>
          <GridInner>
            <Grid>
              <thead>
                <tr>{columns.map(([name, w]) => <HeadCell key={name} $w={w}>{name}</HeadCell>)}</tr>
              </thead>
              <tbody>
                <tr>
                  <Cell>
                    <CellSplit>
                      1000.04
                      <LookupButton aria-label="Find account"><LookupIcon /></LookupButton>
                    </CellSplit>
                  </Cell>
                  <Cell $shade>Kas Transfer(Post Silang)</Cell>
                  <Cell $end>Rp 3.000.000</Cell>
                  <Cell>Pinbuk dari Lapangan</Cell>
                </tr>
              </tbody>
            </Grid>
          </GridInner>
        </GridFrame>
        <TotalLine>Total Deposit :: 3.000.000</TotalLine>
        <ActionBar>
          <ActionButton $w={125}><SaveIcon mark="new" /><span>Simp<u>a</u>n &amp; Baru</span></ActionButton>
          <ActionButton $w={125}><SaveIcon />Simpan &amp; Tutup</ActionButton>
          <ActionButton $w={89}><SaveIcon mark="cancel" /><span>Ba<u>t</u>al</span></ActionButton>
        </ActionBar>
      </Workspace>

      <StatusBar>
        <StatusCell />
        <StatusCell $tinted>Periode 1/2026 - Dari 01 Januari 2026 s/d 31 Januari 2026</StatusCell>
        <StatusCell $tinted>Daftar Sebagai SUPERVISOR</StatusCell>
      </StatusBar>

      <TaskBar>
        <Weather>
          <WeatherIcon />
          <div><Temp>29°C</Temp>Berawan</div>
        </Weather>
        <TaskItems>
          <TaskButton aria-label="Start"><WindowsIcon /></TaskButton>
          <SearchBox>
            <SearchIcon />
            <SearchInput type="text" placeholder="Cari" />
            <ZebraIcon />
          </SearchBox>
          {apps.map((a, i) => (
            <TaskButton key={i} aria-label={a.name} $active={a.active} $running={a.running}>{a.icon}</TaskButton>
          ))}
        </TaskItems>
        <Tray>
          <ChevronUpIcon />
          <CloudOffIcon />
          <span>IND</span>
          <TrayPair><NetworkIcon /><VolumeIcon /></TrayPair>
          <TrayPair>
            <Clock>13.04<br />31/01/2026</Clock>
            <BellIcon />
          </TrayPair>
        </Tray>
      </TaskBar>

      <DialogLayer>
        <Dialog role="dialog" aria-labelledby="dlgTitle">
          <DialogBar>
            <DialogTitle id="dlgTitle">Akun</DialogTitle>
            <ChromeButton aria-label="Close dialog"><CloseX c="#f0dce0" /></ChromeButton>
          </DialogBar>
          <FilterRow>
            <Field $w={169} $white aria-label="Account number filter" />
            <Field $w={366} $white aria-label="Account name filter" />
          </FilterRow>
          <ListFrame>
            <List>
              <tbody>
                {accounts.map(([no, name], i) => (
                  <ListRow key={no} $selected={i === 0}>
                    <ListCell $w={172}>{no}</ListCell>
                    <ListCell>{name}</ListCell>
                  </ListRow>
                ))}
              </tbody>
            </List>
            <Scroll>
              <ScrollButton aria-label="Scroll up"><ScrollChevron /></ScrollButton>
              <ScrollTrack><ScrollThumb /></ScrollTrack>
              <ScrollButton aria-label="Scroll down"><ScrollChevron down /></ScrollButton>
            </Scroll>
          </ListFrame>
          <DialogFoot>
            <SettingsLink href="#"><ExpandIcon />Settings</SettingsLink>
            <NewButton>Aku<u>n</u> Baru</NewButton>
          </DialogFoot>
        </Dialog>
      </DialogLayer>
    </Screen>
  );
}
